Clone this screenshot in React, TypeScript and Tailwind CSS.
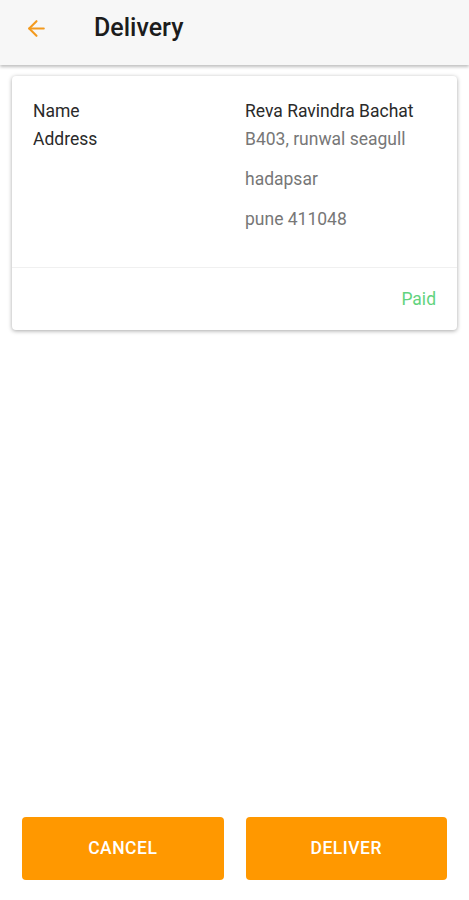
import { ArrowLeft } from "lucide-react";

const font = { fontFamily: "Roboto, 'Noto Sans', sans-serif" };

export default function App() {
  return (
    <div className="h-[900px] w-full bg-white flex flex-col" style={font}>
      <header className="h-[65px] bg-[#f7f7f7] flex items-center pb-[9px] shadow-[0_2px_3px_rgba(0,0,0,0.25)] relative z-10">
        <ArrowLeft className="w-[25px] h-[25px] ml-[24px] text-[#f39a1e]" strokeWidth={2} />
        <h1 className="ml-[45px] text-[25px] font-medium text-[#1c1c1c]">Delivery</h1>
      </header>

      <main className="flex-1 px-3 pt-[11px]">
        <div className="bg-white rounded-[4px] shadow-[0_1px_4px_rgba(0,0,0,0.35)]">
          <div className="flex px-[21px] pt-[21px] pb-[34px] text-[17.5px]">
            <div className="w-[212px] flex flex-col text-[#2a2a2a]">
              <span className="leading-[28px]">Name</span>
              <span className="leading-[28px]">Address</span>
            </div>
            <div className="flex flex-col">
              <span className="leading-[28px] text-[#2a2a2a]">Reva Ravindra Bachat</span>
              <span className="leading-[28px] text-[#777]">B403, runwal seagull</span>
              <span className="leading-[28px] mt-[12px] text-[#777]">hadapsar</span>
              <span className="leading-[28px] mt-[12px] text-[#777]">pune 411048</span>
            </div>
          </div>
          <div className="border-t border-[#f0f0f0] h-[63px] flex items-center justify-end pr-[21px]">
            <span className="text-[17.5px] text-[#62d37e]">Paid</span>
          </div>
        </div>
      </main>

      <footer className="flex gap-[22px] px-[22px] pb-[20px]">
        <button className="flex-1 h-[63px] rounded-[4px] bg-[#ff9800] text-white font-medium text-[17.5px] tracking-[0.5px]">
          CANCEL
        </button>
        <button className="flex-1 h-[63px] rounded-[4px] bg-[#ff9800] text-white font-medium text-[17.5px] tracking-[0.5px]">
          DELIVER
        </button>
      </footer>
    </div>
  );
}
